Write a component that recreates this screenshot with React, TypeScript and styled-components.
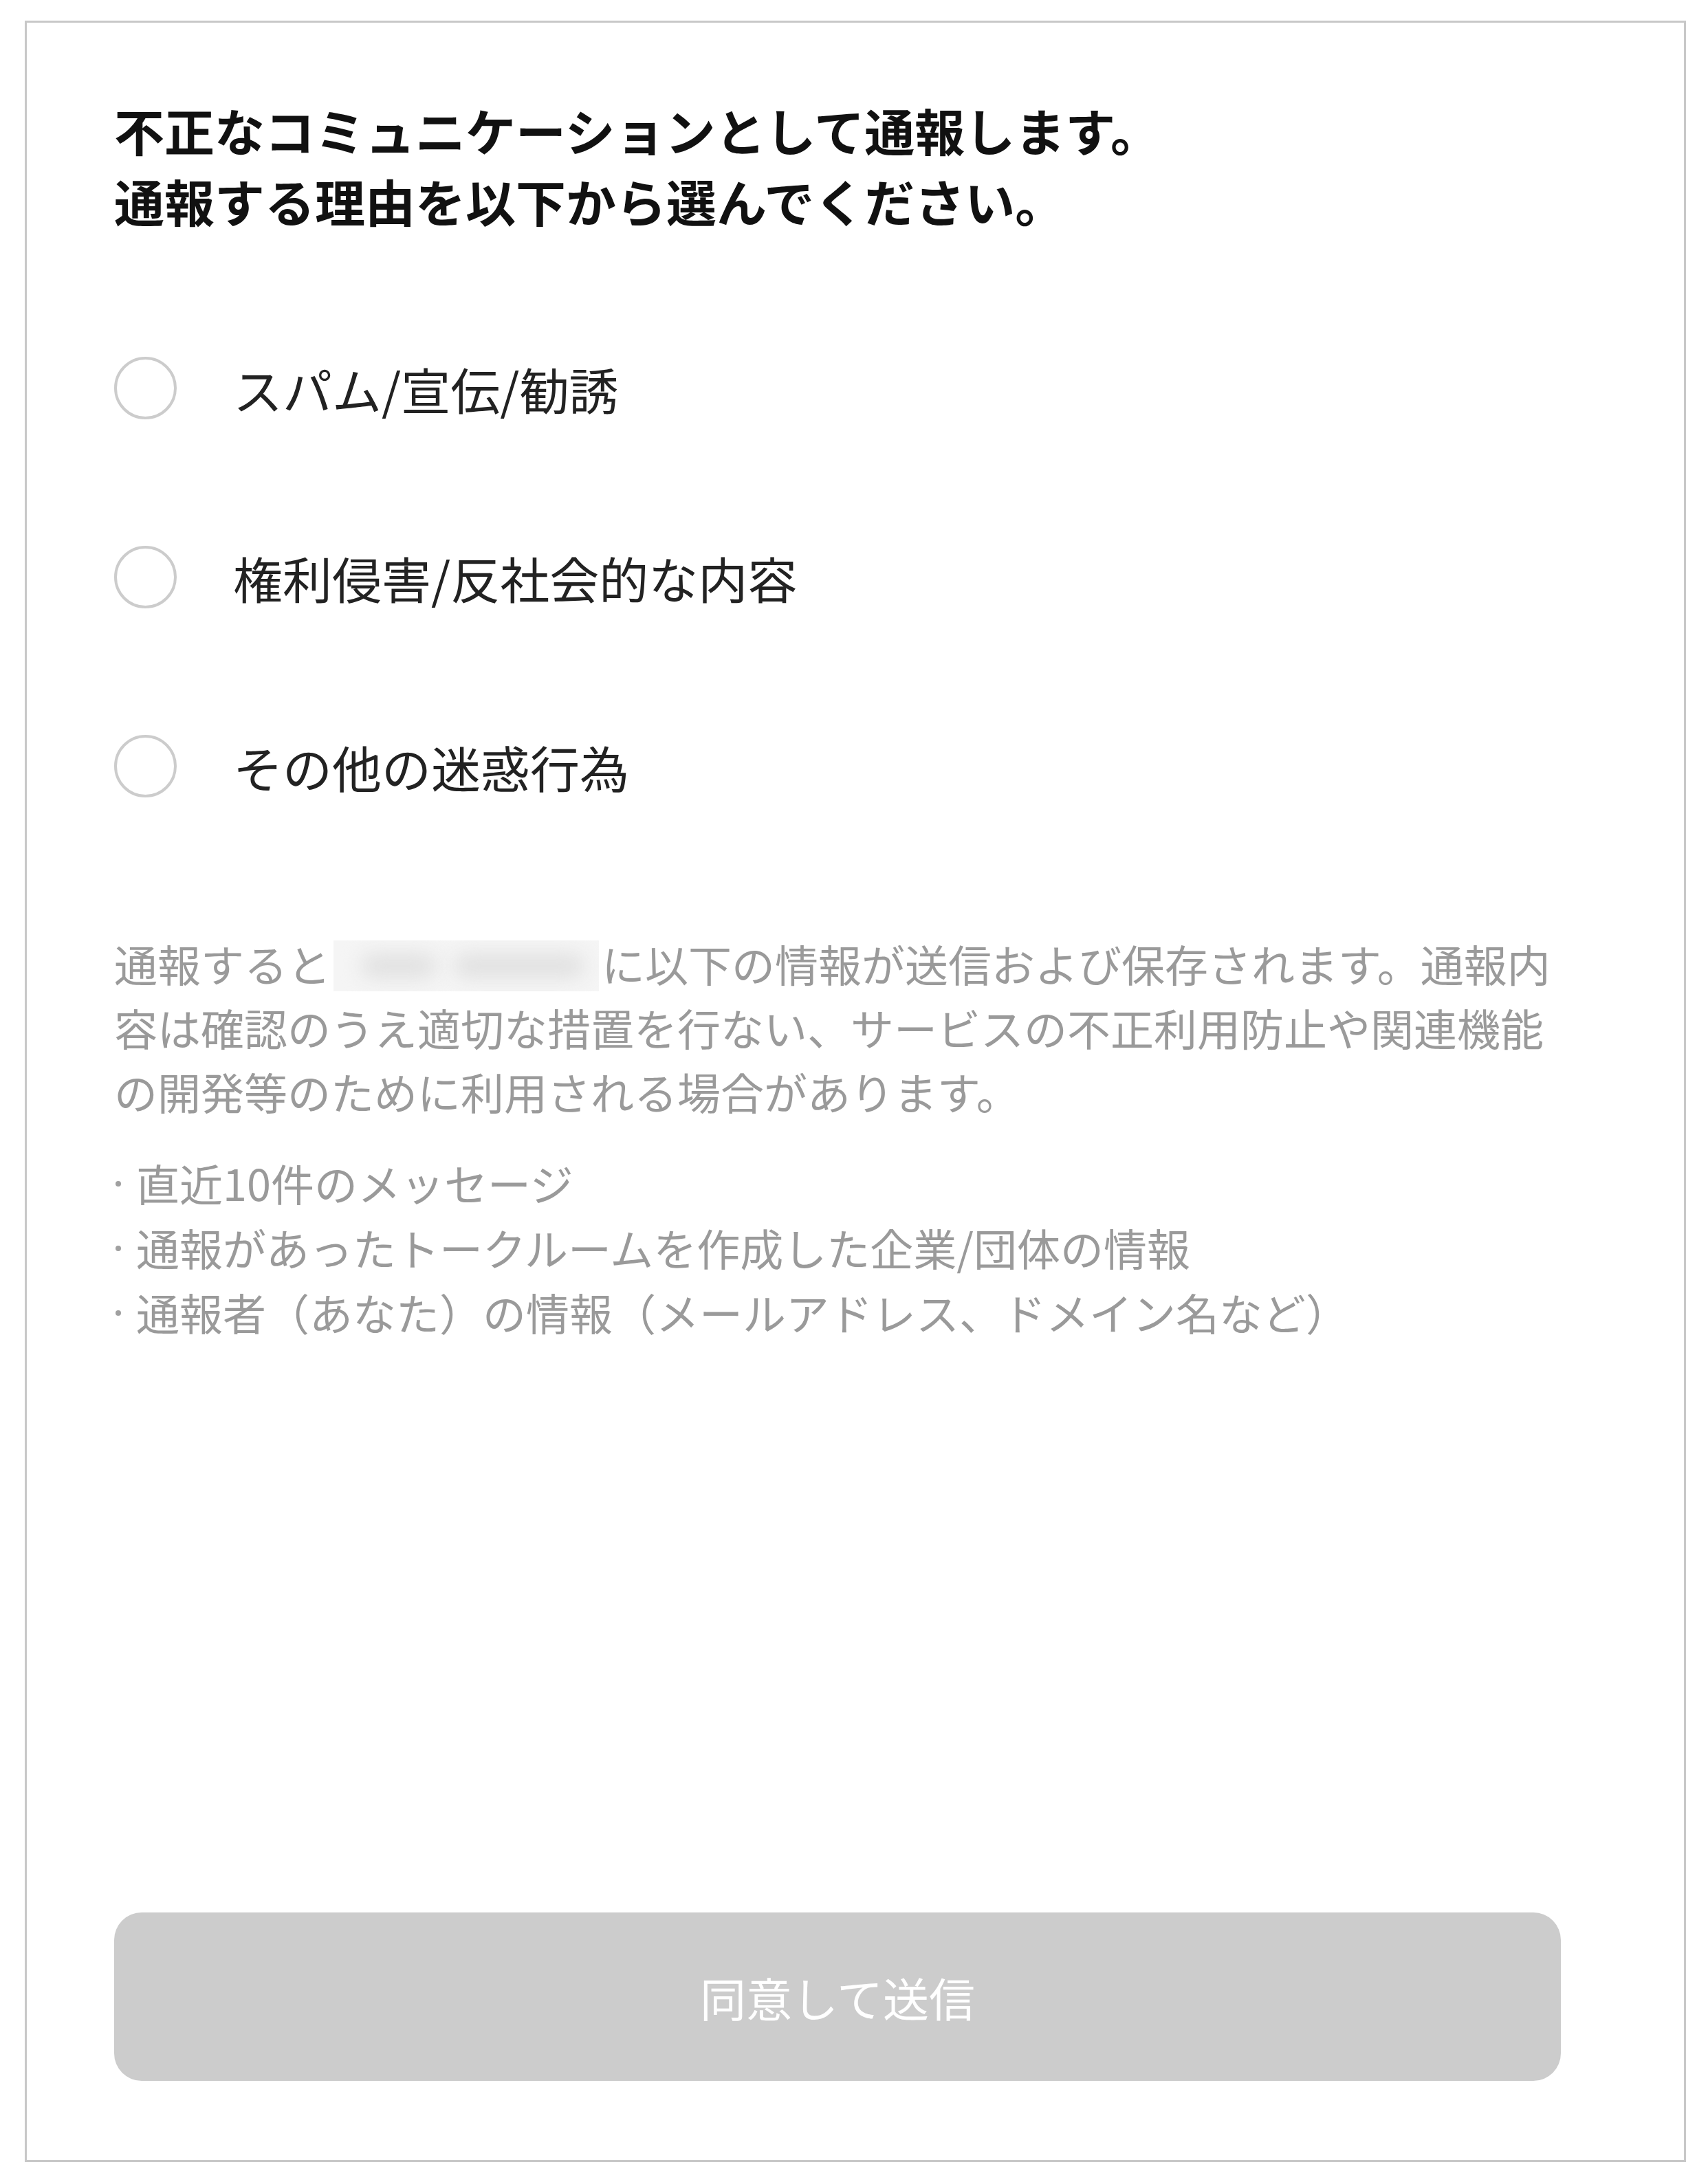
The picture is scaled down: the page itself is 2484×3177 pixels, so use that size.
import styled, { createGlobalStyle } from "styled-components";

const GlobalStyle = createGlobalStyle`
  html, body {
    margin: 0;
    padding: 0;
    background: #ffffff;
  }
  body {
    font-family: "Noto Sans CJK JP", "Noto Sans", sans-serif;
  }
`;

const Page = styled.div`
  padding: 30px 0 0 36px;
`;

const Card = styled.section`
  box-sizing: border-box;
  display: flex;
  flex-direction: column;
  width: 2416px;
  height: 3115px;
  padding: 104px 180px 115px 127px;
  border: 3px solid #c8c8c8;
  background: #ffffff;
`;

const Title = styled.h1`
  margin: 0;
  font-size: 73px;
  line-height: 103px;
  font-weight: 700;
  color: #111111;
`;

const OptionList = styled.div`
  display: flex;
  flex-direction: column;
  margin-top: 84px;
`;

const Option = styled.label`
  display: flex;
  align-items: center;
  gap: 82px;
  height: 275px;
  cursor: pointer;
`;

const Radio = styled.span`
  box-sizing: border-box;
  flex: none;
  width: 91px;
  height: 91px;
  border: 4px solid #cccccc;
  border-radius: 50%;
`;

const OptionText = styled.span`
  font-size: 72px;
  line-height: 100px;
  color: #222222;
`;

const Notice = styled.p`
  margin: 102px 0 0;
  font-size: 63px;
  line-height: 93px;
  color: #9a9a9a;
`;

/* the service name is blurred out in the screenshot */
const Masked = styled.span`
  position: relative;
  display: inline-block;
  width: 386px;
  height: 74px;
  margin: 0 4px;
  vertical-align: -14px;
  background: #f5f5f5;
  overflow: hidden;

  &::before,
  &::after {
    content: "";
    position: absolute;
    top: 20px;
    height: 34px;
    border-radius: 17px;
    background: #e0e0e0;
    filter: blur(14px);
  }
  &::before {
    left: 40px;
    width: 110px;
  }
  &::after {
    left: 175px;
    width: 190px;
  }
`;

const BulletList = styled.ul`
  margin: 40px 0 0;
  padding: 0;
  list-style: none;
  display: flex;
  flex-direction: column;
`;

const Bullet = styled.li`
  display: flex;
  align-items: center;
  font-size: 63px;
  line-height: 94px;
  color: #9a9a9a;
`;

const Dot = styled.span`
  flex: none;
  width: 8px;
  height: 8px;
  margin: 4px 22px 0 2px;
  border-radius: 50%;
  background: #a0a0a0;
`;

const SubmitButton = styled.button`
  margin-top: auto;
  width: 2104px;
  height: 245px;
  border: none;
  border-radius: 40px;
  background: #cccccc;
  color: #ffffff;
  font-family: inherit;
  font-size: 67px;
  cursor: default;
`;

const reasons = ["スパム/宣伝/勧誘", "権利侵害/反社会的な内容", "その他の迷惑行為"];

const sentItems = [
  "直近10件のメッセージ",
  "通報があったトークルームを作成した企業/団体の情報",
  "通報者（あなた）の情報（メールアドレス、ドメイン名など）",
];

export default function App() {
  return (
    <>
      <GlobalStyle />
      <Page>
        <Card>
          <Title>
            不正なコミュニケーションとして通報します。
            <br />
            通報する理由を以下から選んでください。
          </Title>

          <OptionList>
            {reasons.map((reason) => (
              <Option key={reason}>
                <Radio />
                <OptionText>{reason}</OptionText>
              </Option>
            ))}
          </OptionList>

          <Notice>
            通報すると
            <Masked />
            に以下の情報が送信および保存されます。通報内容は確認のうえ適切な措置を行ない、サービスの不正利用防止や関連機能の開発等のために利用される場合があります。
          </Notice>

          <BulletList>
            {sentItems.map((item) => (
              <Bullet key={item}>
                <Dot />
                {item}
              </Bullet>
            ))}
          </BulletList>

          <SubmitButton disabled>同意して送信</SubmitButton>
        </Card>
      </Page>
    </>
  );
}
